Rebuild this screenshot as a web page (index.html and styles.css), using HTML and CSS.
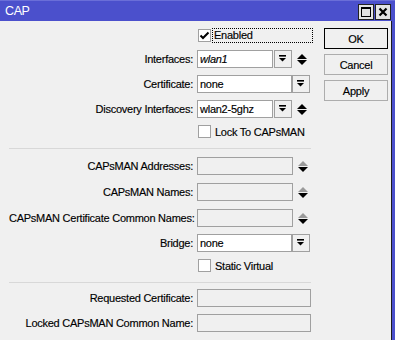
FILE: index.html
```html
<!DOCTYPE html>
<html>
<head>
<meta charset="utf-8">
<link rel="stylesheet" href="styles.css">
</head>
<body>
<div class="window">
  <div class="titlebar">
    <span class="title">CAP</span>
    <div class="tbtns">
      <span class="tbtn"><svg width="14" height="14" viewBox="0 0 14 14"><rect x="2.5" y="2.5" width="9" height="9" fill="none" stroke="#000" stroke-width="1"/><rect x="2" y="2" width="10" height="2" fill="#000"/></svg></span>
      <span class="tbtn"><svg width="14" height="14" viewBox="0 0 14 14"><path d="M3.5 3.5 L10.5 10.5 M10.5 3.5 L3.5 10.5" stroke="#000" stroke-width="2.2"/></svg></span>
    </div>
  </div>
  <div class="content">
    <div class="form">
      <div class="row crow top">
        <span class="label"></span>
        <div class="ctrl">
          <span class="cb"><svg width="11" height="11" viewBox="0 0 11 11"><path d="M1.5 5.5 L4 8 L9.5 2.5" fill="none" stroke="#000" stroke-width="2"/></svg></span>
          <span class="cblabel focus">Enabled</span>
        </div>
      </div>
      <div class="row">
        <span class="label">Interfaces:</span>
        <div class="ctrl">
          <span class="field w76 it">wlan1</span>
          <span class="ddbtn"><svg width="16" height="16" viewBox="0 0 16 16"><rect x="4" y="4" width="7" height="1.6" fill="#000"/><polygon points="4,7 11,7 7.5,10.5" fill="#000"/></svg></span>
          <span class="ud"><svg width="10" height="11" viewBox="0 0 10 11"><polygon points="0,5 10,5 5,0" fill="#000"/><polygon points="0,6 10,6 5,11" fill="#000"/></svg></span>
        </div>
      </div>
      <div class="row">
        <span class="label">Certificate:</span>
        <div class="ctrl">
          <span class="field w95">none</span>
          <span class="ddbtn tight"><svg width="16" height="16" viewBox="0 0 16 16"><rect x="4" y="4" width="7" height="1.6" fill="#000"/><polygon points="4,7 11,7 7.5,10.5" fill="#000"/></svg></span>
        </div>
      </div>
      <div class="row">
        <span class="label">Discovery Interfaces:</span>
        <div class="ctrl">
          <span class="field w76">wlan2-5ghz</span>
          <span class="ddbtn"><svg width="16" height="16" viewBox="0 0 16 16"><rect x="4" y="4" width="7" height="1.6" fill="#000"/><polygon points="4,7 11,7 7.5,10.5" fill="#000"/></svg></span>
          <span class="ud"><svg width="10" height="11" viewBox="0 0 10 11"><polygon points="0,5 10,5 5,0" fill="#000"/><polygon points="0,6 10,6 5,11" fill="#000"/></svg></span>
        </div>
      </div>
      <div class="row crow">
        <span class="label"></span>
        <div class="ctrl">
          <span class="cb"></span>
          <span class="cblabel">Lock To CAPsMAN</span>
        </div>
      </div>
      <div class="sep"></div>
      <div class="row wide">
        <span class="label">CAPsMAN Addresses:</span>
        <div class="ctrl">
          <span class="field dis w96"></span>
          <span class="ud"><svg width="10" height="11" viewBox="0 0 10 11"><polygon points="0,5 10,5 5,0" fill="#9a9a9a"/><polygon points="0,6 10,6 5,11" fill="#000"/></svg></span>
        </div>
      </div>
      <div class="row wide">
        <span class="label">CAPsMAN Names:</span>
        <div class="ctrl">
          <span class="field dis w96"></span>
          <span class="ud"><svg width="10" height="11" viewBox="0 0 10 11"><polygon points="0,5 10,5 5,0" fill="#9a9a9a"/><polygon points="0,6 10,6 5,11" fill="#000"/></svg></span>
        </div>
      </div>
      <div class="row wide">
        <span class="label">CAPsMAN Certificate Common Names:</span>
        <div class="ctrl">
          <span class="field dis w96"></span>
          <span class="ud"><svg width="10" height="11" viewBox="0 0 10 11"><polygon points="0,5 10,5 5,0" fill="#9a9a9a"/><polygon points="0,6 10,6 5,11" fill="#000"/></svg></span>
        </div>
      </div>
      <div class="row">
        <span class="label">Bridge:</span>
        <div class="ctrl">
          <span class="field w95">none</span>
          <span class="ddbtn tight"><svg width="16" height="16" viewBox="0 0 16 16"><rect x="4" y="4" width="7" height="1.6" fill="#000"/><polygon points="4,7 11,7 7.5,10.5" fill="#000"/></svg></span>
        </div>
      </div>
      <div class="row crow">
        <span class="label"></span>
        <div class="ctrl">
          <span class="cb"></span>
          <span class="cblabel">Static Virtual</span>
        </div>
      </div>
      <div class="sep"></div>
      <div class="row near">
        <span class="label">Requested Certificate:</span>
        <div class="ctrl">
          <span class="field dis w114"></span>
        </div>
      </div>
      <div class="row">
        <span class="label">Locked CAPsMAN Common Name:</span>
        <div class="ctrl">
          <span class="field dis w114"></span>
        </div>
      </div>
    </div>
    <div class="buttons">
      <span class="btn default">OK</span>
      <span class="btn">Cancel</span>
      <span class="btn">Apply</span>
    </div>
  </div>
</div>
</body>
</html>
```

FILE: styles.css
```css
html, body {
  margin: 0;
  padding: 0;
}
body {
  font-family: "Liberation Sans", Arial, sans-serif;
  font-size: 11px;
  letter-spacing: -0.25px;
  color: #000;
  background: #4b50cc;
  -webkit-text-stroke: 0.15px #000;
}
.window {
  width: 395px;
  height: 340px;
  display: flex;
  flex-direction: column;
  background: #4b50cc;
  overflow: hidden;
}
.titlebar {
  height: 21px;
  display: flex;
  align-items: center;
  justify-content: space-between;
  padding: 0 4px 0 5px;
  flex: none;
  box-sizing: border-box;
  border-top: 1px solid #6a6ed8;
}
.title {
  color: #fff;
  font-size: 12.5px;
  letter-spacing: -0.4px;
  -webkit-text-stroke: 0;
}
.tbtns {
  display: flex;
  gap: 1px;
  margin-top: 2px;
}
.tbtn {
  width: 16px;
  height: 16px;
  box-sizing: border-box;
  border: 1px solid #222;
  background: #e3e3e3;
  display: flex;
  align-items: center;
  justify-content: center;
}
.content {
  flex: 1;
  width: 392px;
  box-sizing: border-box;
  background: #f0f0f0;
  border-right: 1px solid #1c1c1c;
  display: flex;
}
.form {
  width: 302px;
  margin-left: 9px;
  display: flex;
  flex-direction: column;
}
.row {
  display: flex;
  align-items: center;
  height: 18px;
  margin-top: 7px;
}
.row.crow {
  height: 15px;
  margin-top: 6px;
}
.row.top {
  margin-top: 7px;
}
.row.wide {
  margin-top: 8px;
}
.row.near {
  margin-top: 6px;
}
.label {
  width: 184px;
  text-align: right;
  white-space: nowrap;
  flex: none;
}
.ctrl {
  margin-left: 4px;
  display: flex;
  align-items: center;
  height: 100%;
}
.field {
  height: 18px;
  box-sizing: border-box;
  border: 1px solid #a0a0a0;
  background: #fff;
  padding-left: 2px;
  line-height: 16px;
  white-space: nowrap;
  overflow: hidden;
}
.field.it {
  font-style: italic;
}
.field.dis {
  background: #f0f0f0;
}
.w76 { width: 76px; }
.w95 { width: 95px; }
.w96 { width: 96px; }
.w114 { width: 114px; }
.ddbtn {
  width: 18px;
  height: 18px;
  box-sizing: border-box;
  border: 1px solid #a0a0a0;
  background: #f0f0f0;
  margin-left: 1px;
  display: flex;
  align-items: center;
  justify-content: center;
}
.ddbtn.tight {
  margin-left: 0;
}
.ud {
  margin-left: 5px;
  display: flex;
  align-items: center;
}
.cb {
  width: 13px;
  height: 13px;
  box-sizing: border-box;
  border: 1px solid #a0a0a0;
  background: #fff;
  margin-left: 1px;
  display: flex;
  align-items: center;
  justify-content: center;
}
.cblabel {
  margin-left: 4px;
}
.cblabel.focus {
  margin-left: 1px;
  width: 101px;
  height: 15px;
  box-sizing: border-box;
  border: 1px dotted #000;
  padding-left: 1px;
  line-height: 13px;
}
.sep {
  width: 302px;
  height: 1px;
  background: #d8d8d8;
  margin-top: 9px;
}
.buttons {
  margin-left: 13px;
  padding-top: 7px;
  display: flex;
  flex-direction: column;
  gap: 5px;
}
.btn {
  width: 64px;
  height: 21px;
  box-sizing: border-box;
  border: 1px solid #adadad;
  background: #f0f0f0;
  display: flex;
  align-items: center;
  justify-content: center;
}
.btn.default {
  border-color: #000;
}
```
